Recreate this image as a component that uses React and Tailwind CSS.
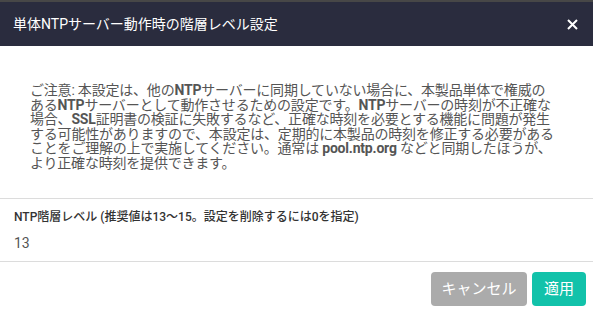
function App() {
  const lines = [
    <>ご注意: 本設定は、他の<b>NTP</b>サーバーに同期していない場合に、本製品単体で権威の</>,
    <>ある<b>NTP</b>サーバーとして動作させるための設定です。<b>NTP</b>サーバーの時刻が不正確な</>,
    <>場合、<b>SSL</b>証明書の検証に失敗するなど、正確な時刻を必要とする機能に問題が発生</>,
    <>する可能性がありますので、本設定は、定期的に本製品の時刻を修正する必要がある</>,
    <>ことをご理解の上で実施してください。通常は <b>pool.ntp.org</b> などと同期したほうが、</>,
    <>より正確な時刻を提供できます。</>,
  ]

  return (
    <div className="w-[593px] h-[315px] bg-white flex flex-col overflow-hidden font-['Roboto','Noto_Sans_CJK_JP',sans-serif]">

      <div className="h-[46px] border-t-2 border-[#474747] bg-[#2a2c3e] flex items-center justify-between pl-[13px] pr-[15px]">
        <h1 className="text-white text-[14px]">単体NTPサーバー動作時の階層レベル設定</h1>
        <svg width="11" height="11" viewBox="0 0 11 11" className="mt-[1px]">
          <path d="M1 1 L10 10 M10 1 L1 10" stroke="white" strokeWidth="2" />
        </svg>
      </div>

      <div className="pt-[37px] pb-[28px] pl-[30px] border-b border-[#dcdcdc]">
        <div className="text-[14px] leading-[14.5px] text-[#555] tracking-[-0.2px]">
          {lines.map((l, i) => (
            <div key={i} className="whitespace-nowrap">{l}</div>
          ))}
        </div>
      </div>

      <div className="pt-[10px] pb-[9px] px-[14px] border-b border-[#dcdcdc]">
        <div className="text-[12px] leading-[16px] font-medium text-[#333]">NTP階層レベル (推奨値は13〜15。設定を削除するには0を指定)</div>
        <div className="text-[14px] leading-[18px] text-[#555] mt-[9px]">13</div>
      </div>

      <div className="flex justify-end gap-[5px] pt-[10px] pr-[7px]">
        <button className="w-[96px] h-[34px] rounded-[4px] bg-[#ababab] text-white text-[15px]">キャンセル</button>
        <button className="w-[54px] h-[34px] rounded-[4px] bg-[#12c2aa] text-white text-[15px]">適用</button>
      </div>

    </div>
  )
}

export default App
